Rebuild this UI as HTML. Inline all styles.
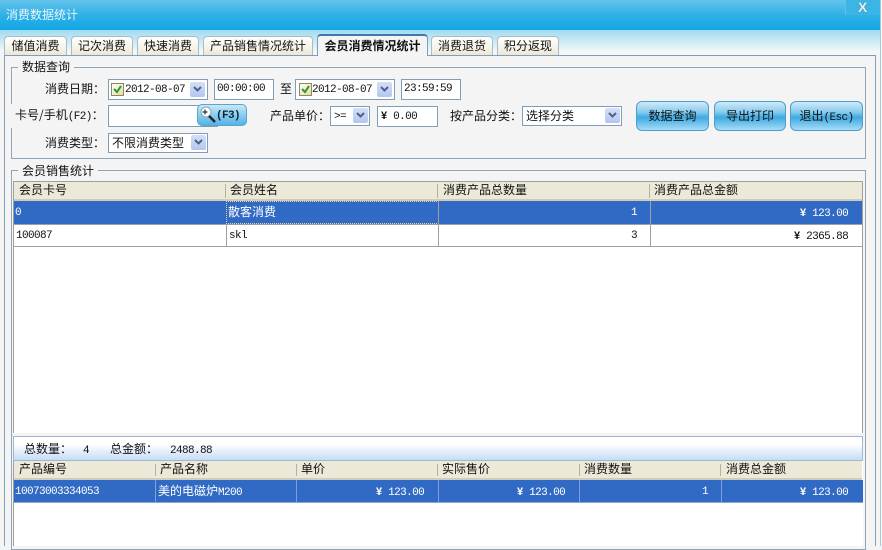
<!DOCTYPE html>
<html><head><meta charset="utf-8"><style>
*{box-sizing:border-box}
html,body{margin:0;padding:0}
body{width:882px;height:546px;overflow:hidden;position:relative;background:#f4f4f4;font:12px/14px "WenQuanYi Zen Hei","Noto Sans CJK SC",sans-serif;color:#111}
div{position:absolute}
.t{white-space:nowrap;height:14px}
.m{font-family:"Liberation Mono",monospace;font-size:11px;letter-spacing:-.6px}
.t.m,.cell.m{line-height:16px}
.tab{top:36px;height:19px;background:linear-gradient(#fff,#f6f3e8 60%,#ebe6d6);border:1px solid #a9bcc9;border-bottom:0;border-radius:4px 4px 0 0;text-align:center;line-height:18px;white-space:nowrap}
.box{background:#fff;border:1px solid #7f9db9}
.dd{width:15px;height:15px;background:linear-gradient(#d4dff7,#b4c6f0);border-radius:2px}
.dd svg{position:absolute;left:3px;top:4px}
.cb{width:13px;height:13px;background:linear-gradient(135deg,#fff,#e8d9a0);border:1px solid #8a8a60}
.cb svg{position:absolute;left:0;top:0}
.btn{top:101px;height:30px;border:1px solid #4d9fcb;border-radius:6px;background:linear-gradient(#cfeafa,#8accee 35%,#3da9e2 55%,#a6ddf7);text-align:center;line-height:28px;white-space:nowrap}
.grp{border:1px solid #8ea6b8}
.hd{background:#ece9d8;border-bottom:2px solid #cfccbc}
.sep{width:1px;background:#b5b2a4}
.cell{white-space:nowrap;height:14px}
b.y{font-family:"Liberation Sans",sans-serif;font-size:11px;letter-spacing:0}
</style></head><body>
<div style="left:0;top:0;width:882px;height:31px;background:linear-gradient(#63c4ec,#2fb0e6 50%,#0ea6e4)"></div>
<div style="left:0;top:30px;width:882px;height:1px;background:#9bdcf4"></div>
<div style="left:0;top:31px;width:882px;height:24px;background:linear-gradient(#a5dcf0,#f2f7f8 85%,#f6f6f6)"></div>
<div class="t" style="left:6px;top:8px;color:#e8f6fc">消费数据统计</div>
<div style="left:845px;top:0;width:35px;height:15px;background:#3bb4e6;border-left:1px solid #5cc2ea"></div>
<div style="left:858px;top:1px;font:bold 14px/12px 'Liberation Sans',sans-serif;color:#e6eef2;text-shadow:0 0 1px #567">X</div>
<div style="left:880px;top:0;width:2px;height:546px;background:#fbfcfc;border-left:1px solid #a8c6d4"></div>

<div style="left:4px;top:55px;width:872px;height:491px;background:#f4f4f4;border:1px solid #7f9db9;border-bottom:0"></div>
<div class="tab" style="left:4px;width:63px">储值消费</div>
<div class="tab" style="left:71px;width:62px">记次消费</div>
<div class="tab" style="left:137px;width:62px">快速消费</div>
<div class="tab" style="left:203px;width:110px">产品销售情况统计</div>
<div class="tab" style="left:317px;top:34px;width:111px;height:22px;background:#f4f4f4;border-color:#7f9db9;border-top:2px solid #3e7ba8;font-weight:bold;line-height:20px;z-index:2">会员消费情况统计</div>
<div class="tab" style="left:431px;width:62px">消费退货</div>
<div class="tab" style="left:497px;width:62px">积分返现</div>

<div class="grp" style="left:11px;top:67px;width:855px;height:92px"></div>
<div style="left:10px;top:104px;width:4px;height:24px;background:#f4f4f4"></div>
<div class="t" style="left:18px;top:60px;background:#f4f4f4;padding:0 4px">数据查询</div>

<div class="t" style="left:45px;top:82px">消费日期：</div>
<div class="box" style="left:108px;top:79px;width:100px;height:21px"></div>
<div class="cb" style="left:111px;top:83px"><svg width="11" height="11"><path d="M2 5l3 3 4-6" fill="none" stroke="#2a9a2a" stroke-width="2"/></svg></div>
<div class="t m" style="left:125px;top:82px">2012-08-07</div>
<div class="dd" style="left:190px;top:82px"><svg width="9" height="7"><path d="M1 1l3.500 3.500L8 1" fill="none" stroke="#4d6185" stroke-width="2"/></svg></div>
<div class="box" style="left:214px;top:79px;width:60px;height:21px"></div>
<div class="t m" style="left:217px;top:81px">00:00:00</div>
<div class="t" style="left:280px;top:82px">至</div>
<div class="box" style="left:295px;top:79px;width:100px;height:21px"></div>
<div class="cb" style="left:299px;top:83px"><svg width="11" height="11"><path d="M2 5l3 3 4-6" fill="none" stroke="#2a9a2a" stroke-width="2"/></svg></div>
<div class="t m" style="left:312px;top:82px">2012-08-07</div>
<div class="dd" style="left:377px;top:82px"><svg width="9" height="7"><path d="M1 1l3.500 3.500L8 1" fill="none" stroke="#4d6185" stroke-width="2"/></svg></div>
<div class="box" style="left:401px;top:79px;width:60px;height:21px"></div>
<div class="t m" style="left:404px;top:81px">23:59:59</div>

<div class="t" style="left:15px;top:108px">卡号/手机<span class="m">(F2)</span>：</div>
<div class="box" style="left:108px;top:105px;width:110px;height:22px"></div>
<div style="left:197px;top:104px;width:50px;height:22px;border:1px solid #5aa5cf;border-radius:5px;background:linear-gradient(#c8e8f8,#8fd0f0 45%,#52b4e6)"></div>
<svg style="position:absolute;left:199px;top:106px" width="20" height="19"><circle cx="7" cy="6" r="5" fill="#fff" stroke="#8aa"/><path d="M6 3.500v5M3.500 6h5" stroke="#234" stroke-width="1.200"/><path d="M10 10l6 6" stroke="#222" stroke-width="2.500"/></svg>
<div class="t m" style="left:216px;top:108px;font-weight:bold;color:#123">(F3)</div>

<div class="t" style="left:270px;top:109px">产品单价：</div>
<div class="box" style="left:330px;top:106px;width:40px;height:20px"></div>
<div class="t m" style="left:334px;top:109px">&gt;=</div>
<div class="dd" style="left:353px;top:108px"><svg width="9" height="7"><path d="M1 1l3.500 3.500L8 1" fill="none" stroke="#4d6185" stroke-width="2"/></svg></div>
<div class="box" style="left:377px;top:106px;width:61px;height:21px"></div>
<div class="t m" style="left:381px;top:108px"><b class="y">¥</b>&nbsp;0.00</div>
<div class="t" style="left:450px;top:109px">按产品分类：</div>
<div class="box" style="left:522px;top:106px;width:100px;height:20px"></div>
<div class="t" style="left:526px;top:109px">选择分类</div>
<div class="dd" style="left:605px;top:108px"><svg width="9" height="7"><path d="M1 1l3.500 3.500L8 1" fill="none" stroke="#4d6185" stroke-width="2"/></svg></div>

<div class="btn" style="left:636px;width:73px">数据查询</div>
<div class="btn" style="left:714px;width:72px">导出打印</div>
<div class="btn" style="left:790px;width:73px">退出<span class="m">(Esc)</span></div>

<div class="t" style="left:45px;top:136px">消费类型：</div>
<div class="box" style="left:108px;top:133px;width:100px;height:20px"></div>
<div class="t" style="left:112px;top:136px">不限消费类型</div>
<div class="dd" style="left:191px;top:135px"><svg width="9" height="7"><path d="M1 1l3.500 3.500L8 1" fill="none" stroke="#4d6185" stroke-width="2"/></svg></div>

<div class="grp" style="left:11px;top:170px;width:855px;height:380px"></div>
<div class="t" style="left:18px;top:164px;background:#f4f4f4;padding:0 4px">会员销售统计</div>

<!-- table 1 -->
<div style="left:13px;top:181px;width:850px;height:252px;background:#fff;border:1px solid #a0a0a0;border-bottom:0"></div>
<div class="hd" style="left:14px;top:182px;width:848px;height:19px"></div>
<div class="sep" style="left:225px;top:184px;height:14px"></div>
<div class="sep" style="left:437px;top:184px;height:14px"></div>
<div class="sep" style="left:649px;top:184px;height:14px"></div>
<div class="t" style="left:19px;top:183px">会员卡号</div>
<div class="t" style="left:230px;top:183px">会员姓名</div>
<div class="t" style="left:443px;top:183px">消费产品总数量</div>
<div class="t" style="left:654px;top:183px">消费产品总金额</div>
<div style="left:14px;top:201px;width:848px;height:23px;background:#316ac5"></div>
<div style="left:226px;top:201px;width:213px;height:23px;background:#316ac5;border:1px dotted #e8d8a0"></div>
<div style="left:14px;top:224px;width:848px;height:1px;background:#a0a0a0"></div>
<div style="left:14px;top:246px;width:848px;height:1px;background:#a0a0a0"></div>
<div style="left:226px;top:225px;width:1px;height:21px;background:#a0a0a0"></div>
<div style="left:438px;top:201px;width:1px;height:45px;background:#a0a0a0"></div>
<div style="left:650px;top:201px;width:1px;height:45px;background:#a0a0a0"></div>
<div class="cell m" style="left:15px;top:205px;color:#fff">0</div>
<div class="cell" style="left:228px;top:205px;color:#fff">散客消费</div>
<div class="cell m" style="left:631px;top:205px;color:#fff">1</div>
<div class="cell m" style="left:800px;top:205px;color:#fff"><b class="y">¥</b>&nbsp;123.00</div>
<div class="cell m" style="left:16px;top:228px">100087</div>
<div class="cell m" style="left:229px;top:228px">skl</div>
<div class="cell m" style="left:631px;top:228px">3</div>
<div class="cell m" style="left:794px;top:228px"><b class="y">¥</b>&nbsp;2365.88</div>

<!-- summary -->
<div style="left:13px;top:436px;width:850px;height:25px;background:linear-gradient(#fff,#fff 30%,#c6dcf6);border:1px solid #9db8d2"></div>
<div class="t" style="left:24px;top:442px">总数量：</div>
<div class="t m" style="left:83px;top:443px">4</div>
<div class="t" style="left:110px;top:442px">总金额：</div>
<div class="t m" style="left:170px;top:443px">2488.88</div>

<!-- table 2 -->
<div style="left:13px;top:461px;width:850px;height:85px;background:#fff;border-left:1px solid #a0a0a0"></div>
<div class="hd" style="left:14px;top:461px;width:848px;height:19px"></div>
<div class="sep" style="left:155px;top:464px;height:12px"></div>
<div class="sep" style="left:296px;top:464px;height:12px"></div>
<div class="sep" style="left:437px;top:464px;height:12px"></div>
<div class="sep" style="left:579px;top:464px;height:12px"></div>
<div class="sep" style="left:720px;top:464px;height:12px"></div>
<div class="t" style="left:19px;top:462px">产品编号</div>
<div class="t" style="left:160px;top:462px">产品名称</div>
<div class="t" style="left:301px;top:462px">单价</div>
<div class="t" style="left:442px;top:462px">实际售价</div>
<div class="t" style="left:584px;top:462px">消费数量</div>
<div class="t" style="left:726px;top:462px">消费总金额</div>
<div style="left:14px;top:480px;width:849px;height:23px;background:#316ac5;border-bottom:1px solid #8fa4c8"></div>
<div style="left:155px;top:480px;width:1px;height:22px;background:#7f9fd8"></div>
<div style="left:296px;top:480px;width:1px;height:22px;background:#7f9fd8"></div>
<div style="left:438px;top:480px;width:1px;height:22px;background:#7f9fd8"></div>
<div style="left:579px;top:480px;width:1px;height:22px;background:#7f9fd8"></div>
<div style="left:721px;top:480px;width:1px;height:22px;background:#7f9fd8"></div>
<div class="cell m" style="left:15px;top:484px;color:#fff">10073003334053</div>
<div class="cell" style="left:158px;top:484px;color:#fff">美的电磁炉<span class="m">M200</span></div>
<div class="cell m" style="left:376px;top:484px;color:#fff"><b class="y">¥</b>&nbsp;123.00</div>
<div class="cell m" style="left:517px;top:484px;color:#fff"><b class="y">¥</b>&nbsp;123.00</div>
<div class="cell m" style="left:702px;top:484px;color:#fff">1</div>
<div class="cell m" style="left:800px;top:484px;color:#fff"><b class="y">¥</b>&nbsp;123.00</div>
</body></html>
